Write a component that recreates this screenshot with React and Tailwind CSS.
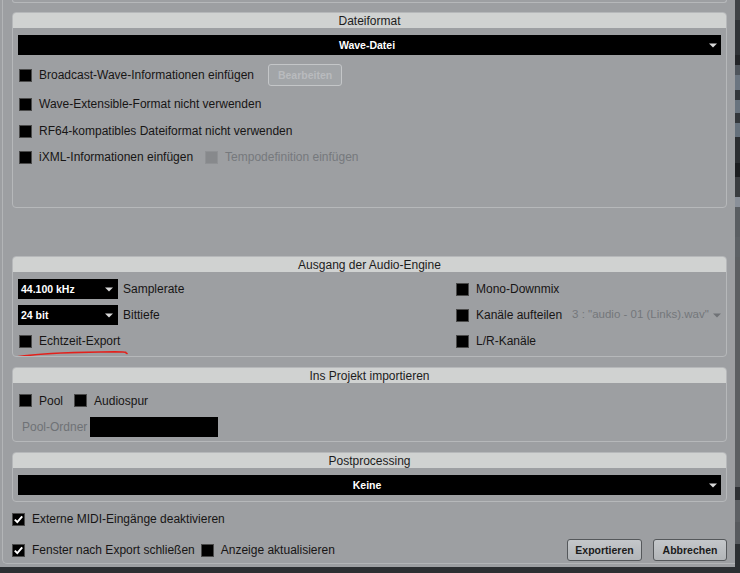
import React from 'react';

const FONT = { fontFamily: '"Liberation Sans", Arial, sans-serif' };

const Arrow = ({ color = '#d9d9d9' }) => (
    <svg width="8" height="5" viewBox="0 0 8 5" className="shrink-0">
        <path d="M0 0.5H8L4 4.5Z" fill={color} />
    </svg>
);

const Box = ({ checked, disabled }) => (
    <span
        className={`w-[13px] h-[13px] shrink-0 border flex items-center justify-center ${
            disabled ? 'bg-[#87898c] border-[#909295]' : 'bg-black border-[#4a4a4a]'
        }`}
    >
        {checked && (
            <svg width="11" height="11" viewBox="0 0 11 11">
                <path d="M1.8 5.6 L4.3 8.1 L9.2 2.4" stroke="#ffffff" strokeWidth="2" fill="none" />
            </svg>
        )}
    </span>
);

const Check = ({ label, checked, disabled, className = '' }) => (
    <div className={`flex items-center gap-[7px] shrink-0 ${className}`}>
        <Box checked={checked} disabled={disabled} />
        <span className={`text-[12px] leading-none whitespace-nowrap ${disabled ? 'text-[#76797d]' : 'text-[#171515]'}`}>{label}</span>
    </div>
);

const Select = ({ value, wide, className = '' }) => (
    <div className={`h-[20px] bg-black flex items-center pr-[5px] ${wide ? 'justify-center relative' : 'pl-[3px] justify-between'} ${className}`}>
        <span className="text-white text-[10.5px] font-bold leading-none">{value}</span>
        {wide ? <span className="absolute right-[4px] top-[8px]"><Arrow /></span> : <Arrow />}
    </div>
);

const Panel = ({ title, className = '', children }) => (
    <div className={`rounded-[4px] border border-[#b6b8ba] overflow-hidden ${className}`}>
        <div className="h-[15px] bg-[#d0d2d1] flex items-center justify-center text-[12px] leading-none text-[#1c1c1c]">{title}</div>
        <div className="px-[5px]">{children}</div>
    </div>
);

const Button = ({ label, disabled, className = '' }) => (
    <button
        type="button"
        className={`h-[22px] rounded-[3px] border text-[10.5px] font-bold leading-none ${
            disabled
                ? 'bg-[#a2a5a8] border-[#c4c6c8] text-[#b9bbbe]'
                : 'bg-gradient-to-b from-[#c4c7ca] to-[#b2b5b8] border-[#55585b] text-[#1b1b1b]'
        } ${className}`}
    >
        {label}
    </button>
);

// Randstreifen rechts (anderes Fenster dahinter)
const STRIP = [
    ['h-[20px]', 'bg-[#404346]'],
    ['h-[35px]', 'bg-[#2f3236]'],
    ['h-[10px]', 'bg-[#222427]'],
    ['h-[10px]', 'bg-[#4f555c]'],
    ['h-[15px]', 'bg-[#6b7580]'],
    ['h-[10px]', 'bg-[#33373b]'],
    ['h-[13px]', 'bg-[#68737e]'],
    ['h-[10px]', 'bg-[#33373b]'],
    ['h-[14px]', 'bg-[#66717c]'],
    ['h-[26px]', 'bg-[#2b2e31]'],
    ['h-[14px]', 'bg-[#1b1d1f]'],
    ['h-[20px]', 'bg-[#3a3d40]'],
    ['h-[10px]', 'bg-[#8a9099]'],
    ['h-[30px]', 'bg-[#5a5e62]'],
    ['h-[20px]', 'bg-[#5d6165]'],
    ['h-[230px]', 'bg-[#5c5f62]'],
    ['h-[13px]', 'bg-[#2e3134]'],
    ['h-[22px]', 'bg-[#5d6064]'],
    ['h-[22px]', 'bg-[#575a5e]'],
];

export default function App() {
    return (
        <div className="w-[740px] h-[573px] flex flex-col bg-[#2c2f32] overflow-hidden" style={FONT}>
            <div className="flex h-[567px]">
                <div className="w-[735px] h-full bg-[#9d9fa2] pl-[2px]">
                    <div className="h-[564px] border-l border-b border-[#b3b5b7] rounded-bl-[5px] pl-[9px] pr-[8px]">
                        {/* unterer Rand des vorigen Bereichs */}
                        <div className="h-[3px] border-l border-r border-b border-[#b6b8ba] rounded-b-[3px]" />

                        <Panel title="Dateiformat" className="mt-[9px] h-[196px]">
                            <Select value="Wave-Datei" wide className="mt-[7px]" />
                            <div className="mt-[9px] h-[22px] flex items-center pl-[1px]">
                                <Check label="Broadcast-Wave-Informationen einfügen" />
                                <Button label="Bearbeiten" disabled className="ml-[14px] w-[74px]" />
                            </div>
                            <div className="mt-[7px] h-[22px] flex items-center pl-[1px]">
                                <Check label="Wave-Extensible-Format nicht verwenden" />
                            </div>
                            <div className="mt-[5px] h-[22px] flex items-center pl-[1px]">
                                <Check label="RF64-kompatibles Dateiformat nicht verwenden" />
                            </div>
                            <div className="mt-[4px] h-[22px] flex items-center pl-[1px] gap-[12px]">
                                <Check label="iXML-Informationen einfügen" />
                                <Check label="Tempodefinition einfügen" disabled />
                            </div>
                        </Panel>

                        <Panel title="Ausgang der Audio-Engine" className="mt-[48px] h-[101px]">
                            <div className="mt-[7px] h-[20px] flex items-center">
                                <div className="w-[438px] shrink-0 flex items-center gap-[5px]">
                                    <Select value="44.100 kHz" className="w-[100px]" />
                                    <span className="text-[12px] leading-none text-[#171515]">Samplerate</span>
                                </div>
                                <Check label="Mono-Downmix" />
                            </div>
                            <div className="mt-[6px] h-[20px] flex items-center">
                                <div className="w-[438px] shrink-0 flex items-center gap-[5px]">
                                    <Select value="24 bit" className="w-[100px]" />
                                    <span className="text-[12px] leading-none text-[#171515]">Bittiefe</span>
                                </div>
                                <Check label="Kanäle aufteilen" />
                                <span className="ml-[10px] text-[11.5px] leading-none text-[#74777b] whitespace-nowrap">3 : "audio - 01 (Links).wav"</span>
                                <span className="ml-[4px]"><Arrow color="#6f7276" /></span>
                            </div>
                            <div className="mt-[5px] h-[22px] flex items-center">
                                <div className="w-[438px] shrink-0 relative pl-[1px]">
                                    <Check label="Echtzeit-Export" />
                                    <svg className="absolute left-[-3px] top-[13px] overflow-visible" width="115" height="10" viewBox="0 0 115 10">
                                        <path d="M1 9 C 20 6, 50 4.5, 85 4 S 108 4.5, 112 5.5" stroke="#e3201b" strokeWidth="1.6" fill="none" strokeLinecap="round" />
                                    </svg>
                                </div>
                                <Check label="L/R-Kanäle" />
                            </div>
                        </Panel>

                        <Panel title="Ins Projekt importieren" className="mt-[10px] h-[75px]">
                            <div className="mt-[7px] h-[21px] flex items-center pl-[1px] gap-[11px]">
                                <Check label="Pool" />
                                <Check label="Audiospur" />
                            </div>
                            <div className="mt-[6px] h-[20px] flex items-center pl-[4px] gap-[3px]">
                                <span className="text-[12px] leading-none text-[#6f7276]">Pool-Ordner</span>
                                <div className="w-[128px] h-[20px] bg-black" />
                            </div>
                        </Panel>

                        <Panel title="Postprocessing" className="mt-[10px] h-[50px]">
                            <Select value="Keine" wide className="mt-[7px]" />
                        </Panel>

                        <div className="mt-[7px] h-[20px] flex items-center">
                            <Check label="Externe MIDI-Eingänge deaktivieren" checked />
                        </div>
                        <div className="mt-[10px] h-[22px] flex items-center">
                            <Check label="Fenster nach Export schließen" checked />
                            <Check label="Anzeige aktualisieren" className="ml-[6px]" />
                            <div className="ml-auto flex gap-[11px]">
                                <Button label="Exportieren" className="w-[75px]" />
                                <Button label="Abbrechen" className="w-[74px]" />
                            </div>
                        </div>
                    </div>
                </div>
                <div className="w-[5px] flex flex-col">
                    {STRIP.map(([h, c], i) => (
                        <div key={i} className={`${h} ${c} shrink-0`} />
                    ))}
                </div>
            </div>
        </div>
    );
}
